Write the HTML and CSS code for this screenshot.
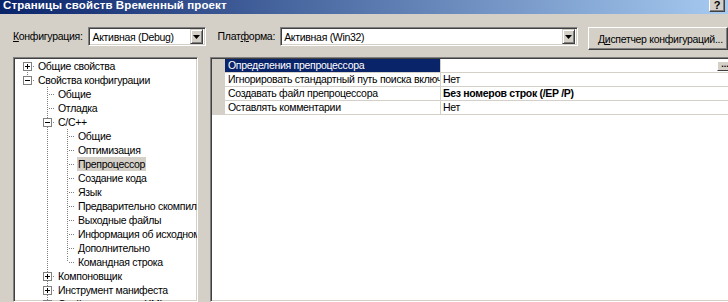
FILE: index.html
```html
<!DOCTYPE html>
<html lang="ru">
<head>
  <meta charset="UTF-8" />
  <title>Страницы свойств Временный проект</title>
  <link rel="stylesheet" href="styles.css">
</head>
<body>
  <div class="window">
    <div class="titlebar">
      <span class="title">Страницы свойств Временный проект</span>
      <span class="help">?</span>
    </div>

    <div class="toolbar">
      <label class="lbl lbl-conf"><u>К</u>онфигурация:</label>
      <div class="combo combo-conf">
        <span class="combo-text">Активная (Debug)</span>
        <span class="drop"><svg width="7" height="4" viewBox="0 0 7 4"><path d="M0 0h7L3.5 4z" fill="#000"/></svg></span>
      </div>
      <label class="lbl lbl-plat">Плат<u>ф</u>орма:</label>
      <div class="combo combo-plat">
        <span class="combo-text">Активная (Win32)</span>
        <span class="drop"><svg width="7" height="4" viewBox="0 0 7 4"><path d="M0 0h7L3.5 4z" fill="#000"/></svg></span>
      </div>
      <button class="btn">Д<u>и</u>спетчер конфигураций...</button>
    </div>

    <div class="main">
      <div class="tree">
        <div class="node"><span class="cn first"><span class="box plus"></span></span><span class="label">Общие свойства</span></div>
        <div class="node"><span class="cn elbow"><span class="box"></span></span><span class="label">Свойства конфигурации</span></div>
        <div class="node"><span class="ind"></span><span class="cn tee"></span><span class="label">Общие</span></div>
        <div class="node"><span class="ind"></span><span class="cn tee"></span><span class="label">Отладка</span></div>
        <div class="node"><span class="ind"></span><span class="cn tee"><span class="box"></span></span><span class="label">C/C++</span></div>
        <div class="node"><span class="ind"></span><span class="ind pipe"></span><span class="cn tee"></span><span class="label">Общие</span></div>
        <div class="node"><span class="ind"></span><span class="ind pipe"></span><span class="cn tee"></span><span class="label">Оптимизация</span></div>
        <div class="node"><span class="ind"></span><span class="ind pipe"></span><span class="cn tee"></span><span class="label selected">Препроцессор</span></div>
        <div class="node"><span class="ind"></span><span class="ind pipe"></span><span class="cn tee"></span><span class="label">Создание кода</span></div>
        <div class="node"><span class="ind"></span><span class="ind pipe"></span><span class="cn tee"></span><span class="label">Язык</span></div>
        <div class="node"><span class="ind"></span><span class="ind pipe"></span><span class="cn tee"></span><span class="label">Предварительно скомпилир</span></div>
        <div class="node"><span class="ind"></span><span class="ind pipe"></span><span class="cn tee"></span><span class="label">Выходные файлы</span></div>
        <div class="node"><span class="ind"></span><span class="ind pipe"></span><span class="cn tee"></span><span class="label">Информация об исходном к</span></div>
        <div class="node"><span class="ind"></span><span class="ind pipe"></span><span class="cn tee"></span><span class="label">Дополнительно</span></div>
        <div class="node"><span class="ind"></span><span class="ind pipe"></span><span class="cn elbow"></span><span class="label">Командная строка</span></div>
        <div class="node"><span class="ind"></span><span class="cn tee"><span class="box plus"></span></span><span class="label">Компоновщик</span></div>
        <div class="node"><span class="ind"></span><span class="cn tee"><span class="box plus"></span></span><span class="label">Инструмент манифеста</span></div>
        <div class="node"><span class="ind"></span><span class="cn tee"><span class="box plus"></span></span><span class="label">Свойства сервиса XML-документов</span></div>
      </div>

      <div class="grid">
        <div class="prow sel">
          <span class="gut"></span>
          <span class="pname">Определения препроцессора</span>
          <span class="pval"><span class="ellipsis">...</span></span>
        </div>
        <div class="prow">
          <span class="gut"></span>
          <span class="pname">Игнорировать стандартный путь поиска включа</span>
          <span class="pval">Нет</span>
        </div>
        <div class="prow">
          <span class="gut"></span>
          <span class="pname">Создавать файл препроцессора</span>
          <span class="pval bold">Без номеров строк (/EP /P)</span>
        </div>
        <div class="prow">
          <span class="gut"></span>
          <span class="pname">Оставлять комментарии</span>
          <span class="pval">Нет</span>
        </div>
      </div>
    </div>
  </div>
</body>
</html>
```

FILE: styles.css
```css
body { margin: 0; background: #d4d0c8; font: 10.5px/14px "Liberation Sans", Arial, sans-serif; letter-spacing: -0.3px; color: #000; overflow: hidden; }
.window { height: 302px; display: flex; flex-direction: column; }

/* title bar */
.titlebar { height: 14px; flex: none; display: flex; justify-content: space-between; padding: 0 3px; background: linear-gradient(to right, #0a246a, #a6caf0); }
.title { color: #fff; font-weight: bold; font-size: 11.5px; line-height: 11px; letter-spacing: 0.1px; white-space: nowrap; }
.help { width: 16px; height: 12px; box-sizing: border-box; background: #d4d0c8; border-left: 1px solid #fff; border-right: 1px solid #404040; border-bottom: 1px solid #404040; box-shadow: inset -1px -1px #808080; font: bold 11px/10px "Liberation Sans", Arial, sans-serif; letter-spacing: 0; text-align: center; }

/* config row */
.toolbar { flex: none; display: flex; align-items: flex-start; padding: 13px 0 0 13px; }
.lbl { height: 19px; line-height: 19px; white-space: nowrap; }
.lbl-conf { width: 76px; }
.lbl-plat { width: 63px; margin-left: 12px; }
.combo { height: 19px; box-sizing: border-box; display: flex; align-items: center; padding: 2px; background: #fff; border: 1px solid; border-color: #808080 #fff #fff #808080; box-shadow: inset 1px 1px #404040, inset -1px -1px #d4d0c8; }
.combo-conf { width: 118px; }
.combo-plat { width: 300px; }
.combo-text { padding-left: 1px; white-space: nowrap; }
.drop { margin-left: auto; width: 13px; height: 15px; box-sizing: border-box; display: flex; align-items: center; justify-content: center; background: #d4d0c8; border: 1px solid; border-color: #d4d0c8 #404040 #404040 #d4d0c8; box-shadow: inset 1px 1px #fff, inset -1px -1px #808080; }
.btn { margin-left: 10px; width: 140px; height: 23px; flex: none; padding: 0 0 0 9px; text-align: left; white-space: nowrap; overflow: hidden; font: inherit; letter-spacing: inherit; color: #000; background: #d4d0c8; border: 1px solid; border-color: #fff #404040 #404040 #fff; box-shadow: inset -1px -1px #808080; }

/* panels */
.main { flex: 1; min-height: 0; display: flex; gap: 12px; padding: 7px 0 0 13px; }
.tree, .grid { flex: none; box-sizing: border-box; background: #fff; overflow: hidden; border: 1px solid; border-color: #808080 #fff #fff #808080; box-shadow: inset 1px 1px #404040, inset -1px -1px #d4d0c8; padding: 1px; }
.tree { width: 185px; }
.grid { width: 525px; }

/* tree */
.node { display: flex; height: 14px; white-space: nowrap; --v: repeating-linear-gradient(to bottom, #808080 0 1px, transparent 1px 2px); --h: repeating-linear-gradient(to right, #808080 0 1px, transparent 1px 2px); }
.ind, .cn { width: 20px; height: 14px; flex: none; }
.pipe { background: var(--v) 12px 0 / 1px 14px no-repeat; }
.tee { background: var(--v) 12px 0 / 1px 14px no-repeat, var(--h) 14px 7px / 6px 1px no-repeat; }
.elbow { background: var(--v) 12px 1px / 1px 6px no-repeat, var(--h) 14px 7px / 6px 1px no-repeat; }
.first { background: var(--v) 12px 9px / 1px 5px no-repeat, var(--h) 14px 7px / 6px 1px no-repeat; }
.box { display: block; width: 9px; height: 9px; box-sizing: border-box; margin: 3px 0 0 8px; border: 1px solid #808080; background: linear-gradient(#000, #000) center / 5px 1px no-repeat, #fff; }
.box.plus { background: linear-gradient(#000, #000) center / 5px 1px no-repeat, linear-gradient(#000, #000) center / 1px 5px no-repeat, #fff; }
.label { margin-left: 2px; padding: 0 1px; }
.label.selected { background: #d4d0c8; }

/* property grid */
.prow { display: flex; height: 14px; }
.gut { width: 13px; flex: none; background: #d4d0c8; }
.pname, .pval { box-sizing: border-box; height: 14px; line-height: 13px; white-space: nowrap; overflow: hidden; border-bottom: 1px solid #d4d0c8; }
.pname { width: 216px; flex: none; padding-left: 3px; border-right: 1px solid #d4d0c8; }
.pval { flex: 1; display: flex; padding-left: 2px; }
.bold { font-weight: bold; }
.sel .pname { background: #0a246a; color: #fff; }
.ellipsis { margin: 2px 0 0 auto; width: 16px; height: 10px; box-sizing: border-box; background: #d4d0c8; border: 1px solid; border-color: #fff #404040 #404040 #fff; font: bold 9px/5px "Liberation Sans", Arial, sans-serif; letter-spacing: 0; text-align: center; }
```
